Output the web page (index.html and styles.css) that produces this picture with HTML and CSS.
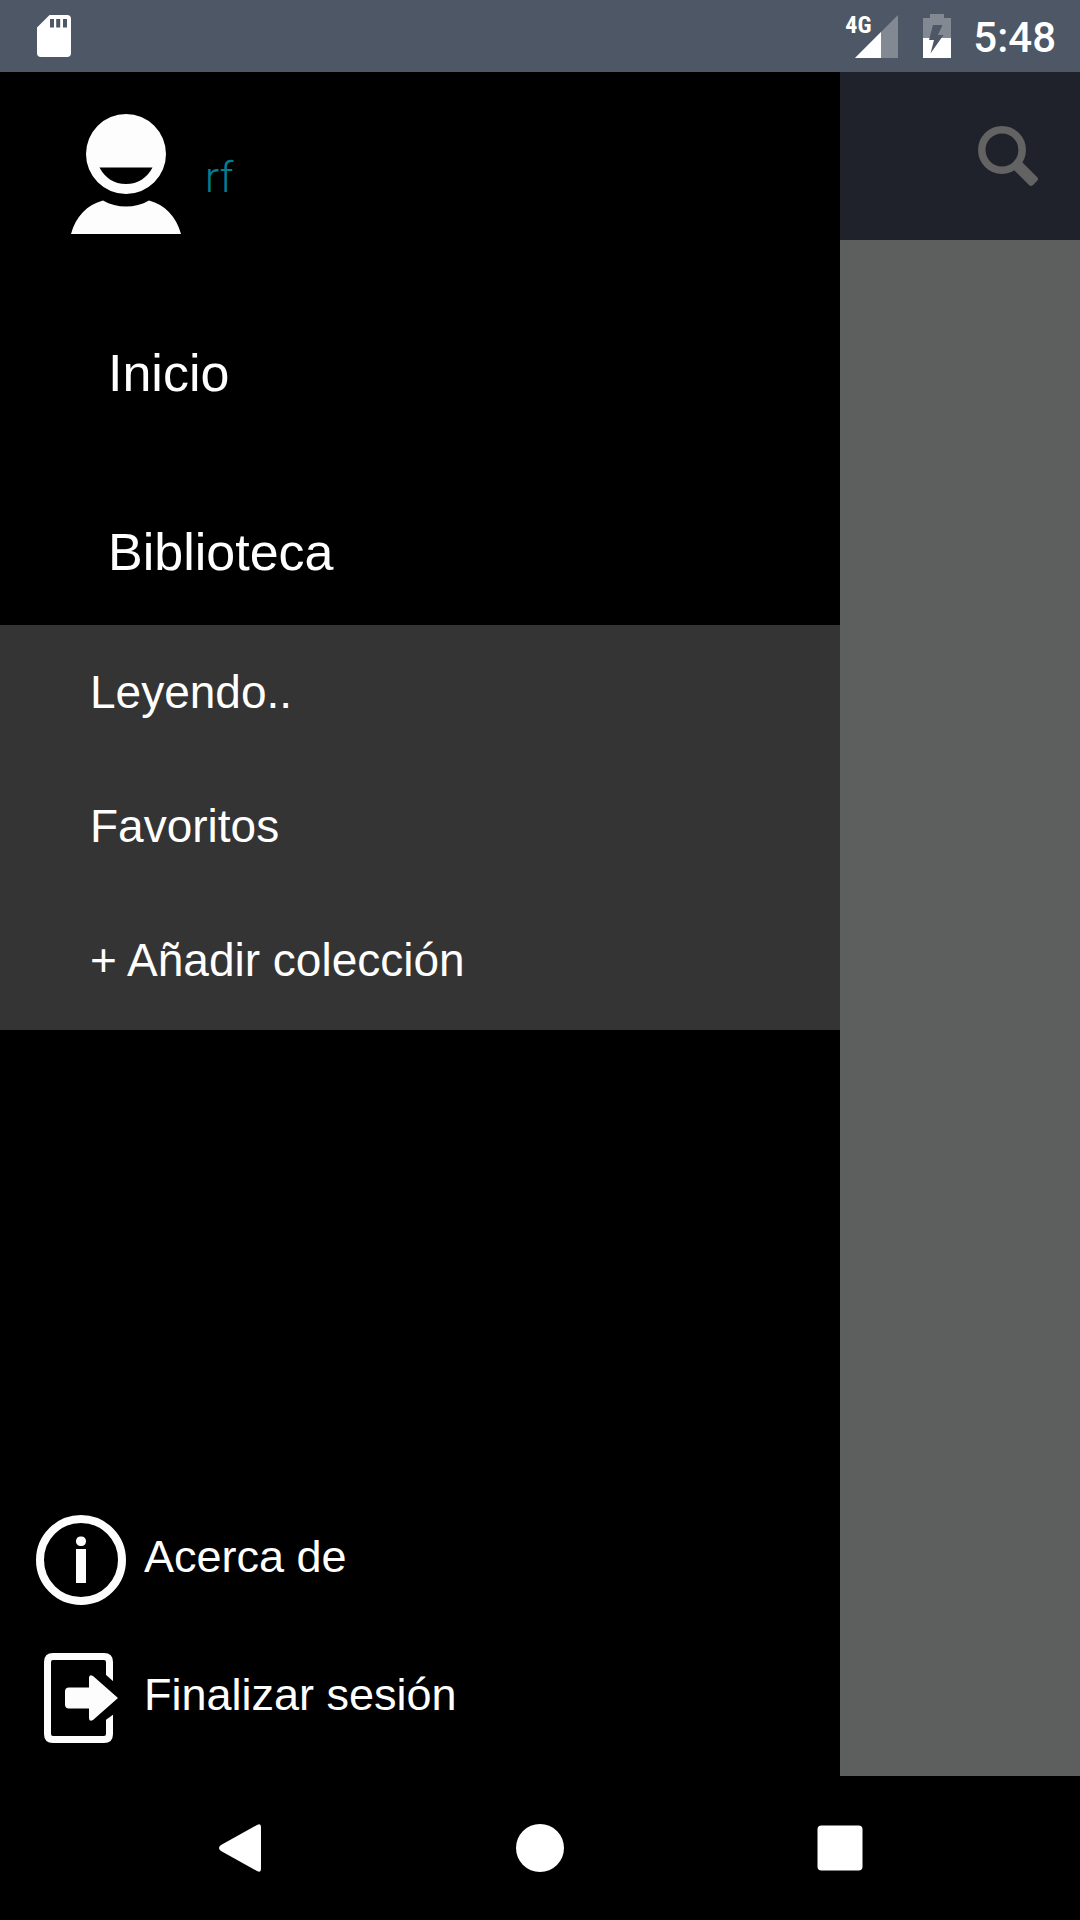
FILE: index.html
```html
<!DOCTYPE html>
<html lang="es">
<head>
  <meta charset="UTF-8" />
  <meta name="viewport" content="width=device-width, initial-scale=1.0"/>
  <title>Biblioteca</title>
  <link rel="stylesheet" href="styles.css">
</head>
<body>

<div class="status-bar">
  <svg class="sd-card" width="34" height="42" viewBox="0 0 34 42">
    <path fill="#fff" fill-rule="evenodd" d="M12.500 0H30a4 4 0 0 1 4 4V38a4 4 0 0 1-4 4H4a4 4 0 0 1-4-4V12.500zM13 4v8.500h4V4zM19.200 4v8.500h4V4zM26 4v8.500h4V4z"/>
  </svg>
  <div class="signal">
    <span class="network">4G</span>
    <svg width="43" height="43" viewBox="0 0 43 43">
      <path fill="#838993" d="M43 0V43H0z"/>
      <path fill="#fff" d="M26 17V43H0z"/>
    </svg>
  </div>
  <svg class="battery" width="28" height="44" viewBox="0 0 28 44">
    <path fill="#838993" d="M7 0H21V4H28V24H0V4H7z"/>
    <path fill="#fff" d="M0 24H28V44H0z"/>
    <path fill="#4d5766" d="M10 11H19.500L15 21H20.500L7.500 39.500L11 26H6z"/>
  </svg>
  <span class="clock">5:48</span>
</div>

<div class="app">
  <aside class="drawer">
    <div class="user">
      <svg width="110" height="120" viewBox="0 0 110 120">
        <path fill="#fdfdfd" fill-rule="evenodd" d="M55 0a40 40 0 1 1 0 80a40 40 0 1 1 0-80zM28.500 53.500C34 64 43 70 55 70S76 64 81.500 53.500z"/>
        <path fill="#fdfdfd" d="M0 120C5 102 16 91 32 86.500C46 94.500 64 94.500 78 86.500C94 91 105 102 110 120z"/>
      </svg>
      <span class="user-name">rf</span>
    </div>

    <nav>
      <a class="menu-item" href="#">Inicio</a>
      <a class="menu-item" href="#">Biblioteca</a>
      <div class="collections">
        <a class="collection" href="#">Leyendo..</a>
        <a class="collection" href="#">Favoritos</a>
        <button class="collection">+ Añadir colección</button>
      </div>
    </nav>

    <div class="drawer-footer">
      <a class="footer-item" href="#">
        <svg width="90" height="90" viewBox="0 0 90 90">
          <circle cx="45" cy="45" r="41" fill="none" stroke="#fdfdfd" stroke-width="8"/>
          <rect x="40" y="21.500" width="10" height="9.500" rx="4.500" fill="#fdfdfd"/>
          <rect x="40" y="34" width="10" height="34" fill="#fdfdfd"/>
        </svg>
        <span>Acerca de</span>
      </a>
      <button class="footer-item">
        <svg width="90" height="90" viewBox="0 0 90 90">
          <path fill="none" stroke="#fdfdfd" stroke-width="7" d="M73.500 29V9Q73.500 3.500 68 3.500H17Q11.500 3.500 11.500 9V81Q11.500 86.500 17 86.500H68Q73.500 86.500 73.500 81V61"/>
          <path fill="#000" d="M69 21L78 29V61L69 67.500z"/>
          <path fill="#fdfdfd" d="M53 25Q53 21 57 23L82 45L57 67Q53 69 53 65V55.500H33Q29 55.500 29 51.500V38.500Q29 34.500 33 34.500H53z"/>
        </svg>
        <span>Finalizar sesión</span>
      </button>
    </div>
  </aside>

  <main class="page">
    <header class="app-bar">
      <button class="search" aria-label="Buscar">
        <svg width="60" height="60" viewBox="0 0 60 60">
          <circle cx="24" cy="24" r="20.200" fill="none" stroke="#636363" stroke-width="7.500"/>
          <path fill="#636363" d="M44 36L59 51Q61 53 59 55L55 59Q53 61 51 59L36 44z"/>
        </svg>
      </button>
    </header>
  </main>
</div>

<div class="nav-bar">
  <button aria-label="Atrás">
    <svg width="48" height="48" viewBox="0 0 48 48">
      <path fill="#fff" d="M45 3V45Q45 49 41 47L5 27Q1 24 5 21L41 1Q45-1 45 3z"/>
    </svg>
  </button>
  <button aria-label="Inicio">
    <svg width="48" height="48" viewBox="0 0 48 48">
      <circle cx="24" cy="24" r="24" fill="#fff"/>
    </svg>
  </button>
  <button aria-label="Recientes">
    <svg width="48" height="48" viewBox="0 0 48 48">
      <rect x="1.500" y="1.500" width="45" height="45" rx="4" fill="#fff"/>
    </svg>
  </button>
</div>

</body>
</html>
```

FILE: styles.css
```css
body {
  margin: 0;
  min-height: 100vh;
  display: flex;
  flex-direction: column;
  font-family: "Liberation Sans", Arial, sans-serif;
  background: #000;
  color: #fff;
}
svg {
  display: block;
  flex: none;
}
a {
  color: inherit;
  text-decoration: none;
}
button {
  padding: 0;
  border: none;
  background: none;
  color: inherit;
  font: inherit;
  text-align: left;
  cursor: pointer;
}

/* status bar */
.status-bar {
  display: flex;
  align-items: center;
  height: 72px;
  padding: 0 24px 0 37px;
  background: #4d5766;
  font-family: Roboto, sans-serif;
  font-weight: 500;
}
.signal {
  position: relative;
  margin-left: auto;
}
.network {
  position: absolute;
  top: -2px;
  left: -10px;
  font-family: "Roboto Condensed", Roboto, sans-serif;
  font-size: 24px;
  line-height: 24px;
  font-weight: 700;
}
.battery {
  margin: 0 22px 0 25px;
}
.clock {
  padding-top: 4px;
  font-size: 42px;
  line-height: 48px;
}

/* drawer */
.app {
  flex: 1;
  display: flex;
}
.drawer {
  flex: 7;
  display: flex;
  flex-direction: column;
  padding-bottom: 9px;
}
.user {
  display: flex;
  align-items: center;
  gap: 24px;
  padding: 42px 71px 33px;
}
.user-name {
  padding-top: 8px;
  font-family: Roboto, sans-serif;
  font-size: 42px;
  line-height: 48px;
  font-weight: 300;
  color: #007f91;
}
.menu-item {
  display: block;
  padding: 76px 108px 43px;
  font-size: 52px;
  line-height: 60px;
}
.collections {
  padding-bottom: 3px;
  background: #343434;
}
.collection {
  display: block;
  width: 100%;
  padding: 0 90px;
  box-sizing: border-box;
  font-size: 46px;
  line-height: 134px;
}
.drawer-footer {
  margin-top: auto;
}
.footer-item {
  display: flex;
  gap: 18px;
  width: 100%;
  padding: 24px 36px;
  box-sizing: border-box;
  font-size: 45px;
  line-height: 84px;
}

/* page behind the drawer */
.page {
  flex: 2;
  background: #5d5f5e;
}
.app-bar {
  display: flex;
  align-items: center;
  justify-content: flex-end;
  height: 168px;
  padding: 0 42px;
  background: #1f222a;
}

/* navigation bar */
.nav-bar {
  display: flex;
  height: 144px;
  padding: 0 90px;
}
.nav-bar button {
  flex: 1;
  display: flex;
  align-items: center;
  justify-content: center;
}
```
